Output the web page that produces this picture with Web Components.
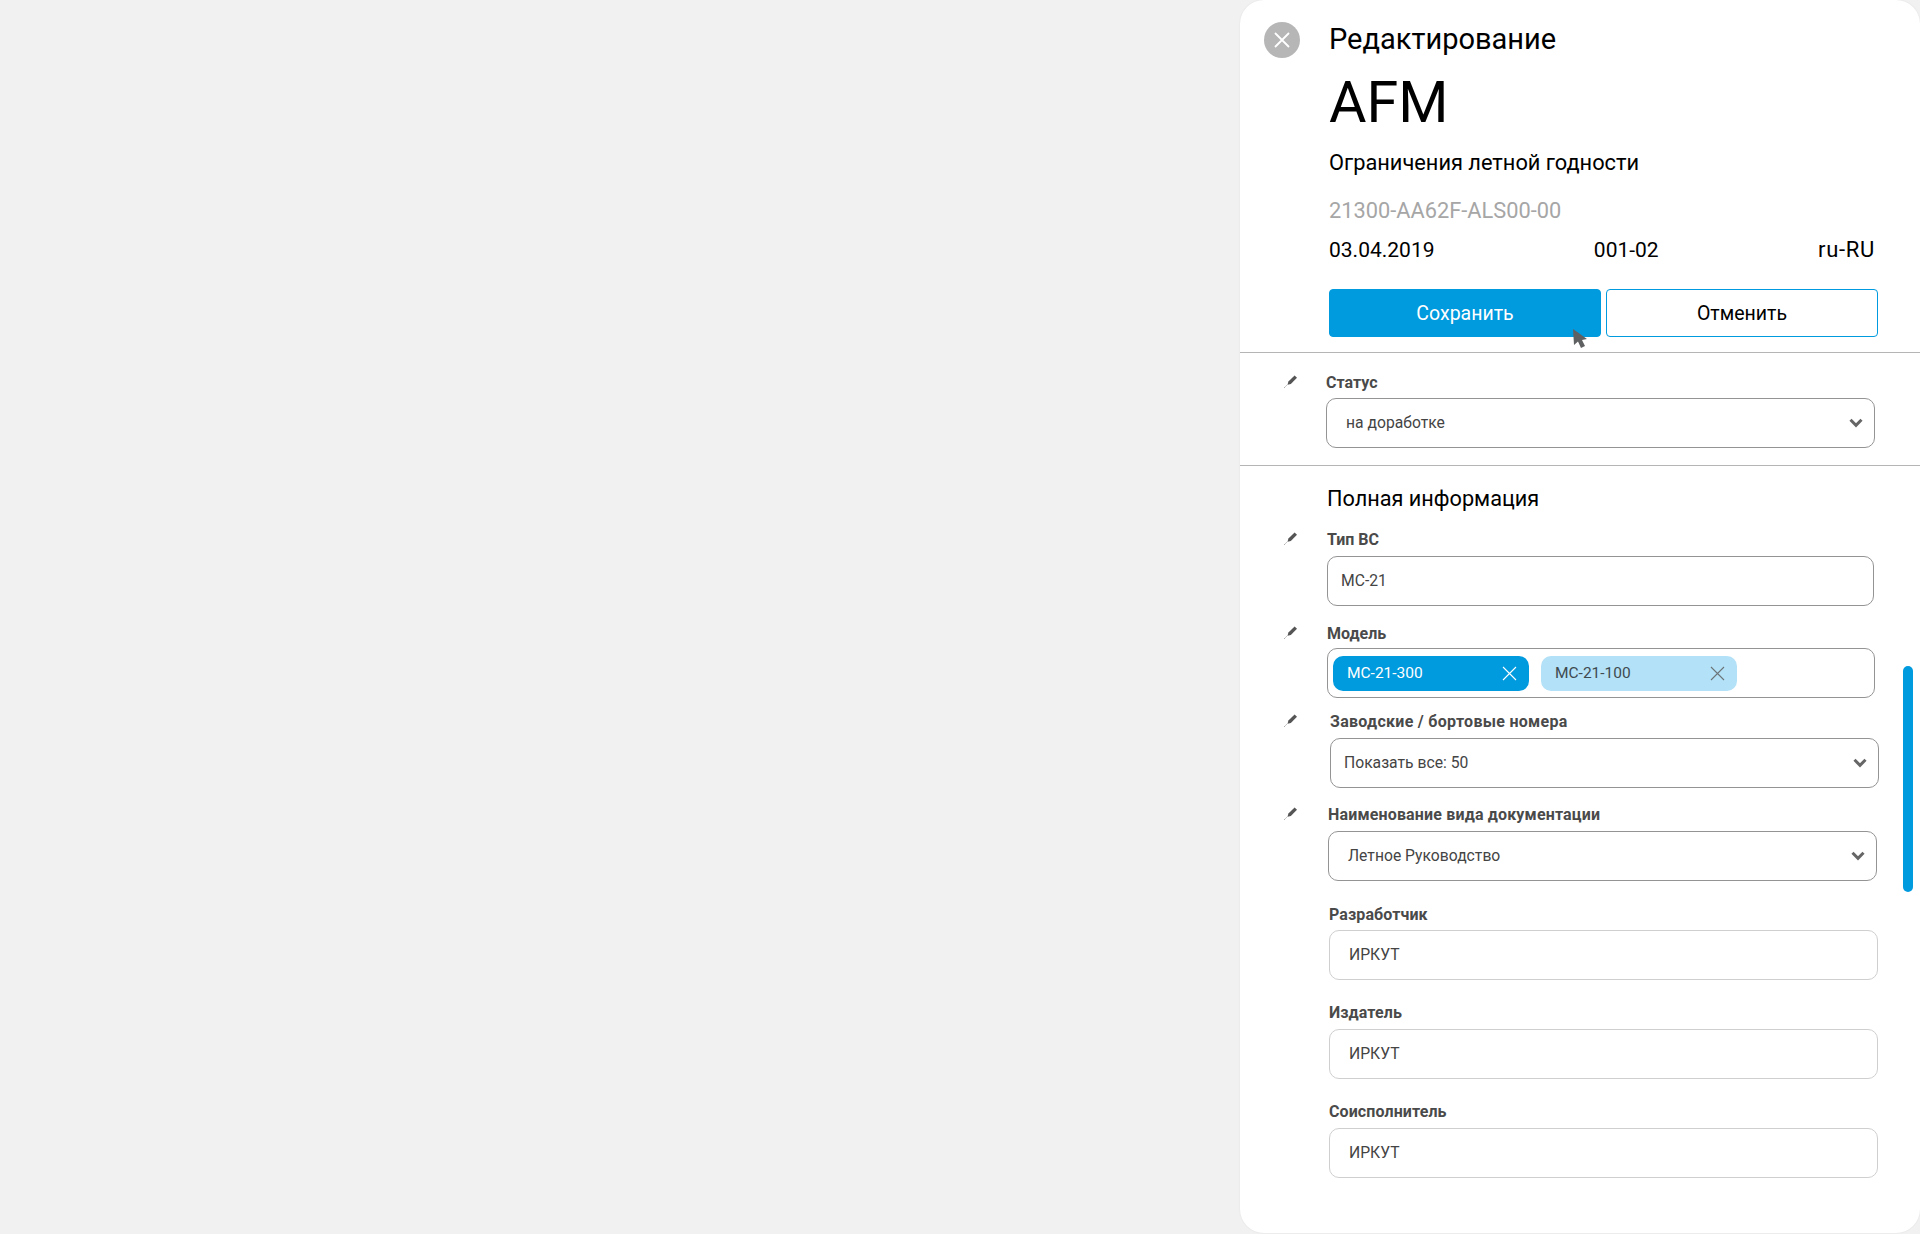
<!DOCTYPE html>
<html lang="ru">
<head>
<meta charset="utf-8">
<title>Редактирование</title>
<style>
  html, body { margin: 0; height: 100%; }
  body {
    background: #f1f1f1;
    display: flex;
    justify-content: flex-end;
    overflow: hidden;
    font-family: Roboto, "Liberation Sans", sans-serif;
  }
</style>
</head>
<body>
<edit-panel>
  <panel-header
    slot="header"
    kicker="Редактирование"
    name="AFM"
    subtitle="Ограничения летной годности"
    code="21300-AA62F-ALS00-00"
    date="03.04.2019"
    version="001-02"
    locale="ru-RU"></panel-header>
  <section-rule></section-rule>

  <form-field label="Статус" editable style="--indent:86px;--width:549px;--gap:6px;margin-top:19px">
    <field-box value="на доработке" chevron style="--pad:19px"></field-box>
  </form-field>

  <section-rule style="margin-top:17px"></section-rule>
  <section-title style="margin-top:19px">Полная информация</section-title>

  <form-field label="Тип ВС" editable style="--indent:87px;--width:547px;--gap:7px;margin-top:16px">
    <field-box value="МС-21" style="--pad:13px"></field-box>
  </form-field>

  <form-field label="Модель" editable style="--indent:87px;--width:548px;--gap:5px;margin-top:17px">
    <field-box style="--pad:5px">
      <tag-chip active>МС-21-300</tag-chip>
      <tag-chip>МС-21-100</tag-chip>
    </field-box>
  </form-field>

  <form-field label="Заводские / бортовые номера" editable style="--indent:90px;--width:549px;--gap:7px;--track:0.28px;margin-top:13px">
    <field-box value="Показать все: 50" chevron style="--pad:13px"></field-box>
  </form-field>

  <form-field label="Наименование вида документации" editable style="--indent:88px;--width:549px;--gap:7px;--track:0.16px;margin-top:16px">
    <field-box value="Летное Руководство" chevron style="--pad:19px"></field-box>
  </form-field>

  <form-field label="Разработчик" style="--indent:89px;--width:549px;--gap:6px;--track:0.1px;margin-top:23px">
    <field-box value="ИРКУТ" light style="--pad:19px"></field-box>
  </form-field>

  <form-field label="Издатель" style="--indent:89px;--width:549px;--gap:7px;--track:0.1px;margin-top:22px">
    <field-box value="ИРКУТ" light style="--pad:19px"></field-box>
  </form-field>

  <form-field label="Соисполнитель" style="--indent:89px;--width:549px;--gap:7px;--track:0.1px;margin-top:22px">
    <field-box value="ИРКУТ" light style="--pad:19px"></field-box>
  </form-field>
</edit-panel>

<script>
// панель справа, скролл и курсор лежат поверх контента
class EditPanel extends HTMLElement {
  constructor() {
    super();
    this.attachShadow({ mode: "open" });
  }

  connectedCallback() {
    this.shadowRoot.innerHTML = `
    <style>
      :host {
        display: block;
        position: relative;
        box-sizing: border-box;
        width: 680px;
        height: 1233px;
        background: #fff;
        border-radius: 24px;
        overflow: hidden;
        box-shadow: 0 0 2px rgba(0, 0, 0, 0.08);
      }
      .scroll {
        position: absolute;
        left: 663px;
        top: 666px;
        width: 10px;
        height: 226px;
        border-radius: 5px;
        background: #009ade;
      }
      .cursor {
        position: absolute;
        left: 332px;
        top: 328px;
        width: 16px;
        height: 22px;
      }
    </style>
    <slot name="header"></slot>
    <slot></slot>
    <div class="scroll"></div>
    <svg class="cursor" viewBox="0 0 16 22">
      <path d="M1 1 L2 17 L6 13.5 L9 20 L13 18 L10 12 L15 11 Z" fill="#5f6062"/>
    </svg>
    `;
  }
}

class PanelHeader extends HTMLElement {
  constructor() {
    super();
    this.attachShadow({ mode: "open" });
  }

  connectedCallback() {
    const a = (name) => this.getAttribute(name);
    this.shadowRoot.innerHTML = `
    <style>
      :host {
        display: block;
        box-sizing: border-box;
        height: 352px;
        padding: 19px 0 0 24px;
        color: #000;
      }
      .wrap {
        display: grid;
        grid-template-columns: 36px 1fr;
        column-gap: 29px;
      }
      .close {
        width: 36px;
        height: 36px;
        margin-top: 3px;
        border-radius: 50%;
        background: #b6b6b6;
        display: flex;
        align-items: center;
        justify-content: center;
      }
      .kicker { font-size: 29px; line-height: 40px; }
      .name { font-size: 57.5px; line-height: 64px; margin-top: 12px; }
      .subtitle { font-size: 21.8px; line-height: 32px; margin-top: 12px; }
      .code { font-size: 21.8px; line-height: 28px; margin-top: 18px; color: #a6a6a6; }
      .meta {
        display: flex;
        justify-content: space-between;
        align-items: baseline;
        width: 546px;
        font-size: 21px;
        line-height: 28px;
        margin-top: 11px;
      }
      .locale { font-size: 22px; letter-spacing: 0.7px; }
      .actions {
        display: grid;
        grid-template-columns: 272px 272px;
        column-gap: 5px;
        margin-top: 25px;
      }
      button {
        height: 48px;
        border-radius: 4px;
        border: 1px solid #009ade;
        font: inherit;
        font-size: 19.5px;
        background: #fff;
        color: #000;
        padding: 0;
      }
      button.primary { background: #009ade; color: #fff; }
    </style>
    <div class="wrap">
      <div class="close">
        <svg width="18" height="18" viewBox="0 0 18 18">
          <path d="M2 2 L16 16 M16 2 L2 16" stroke="#fff" stroke-width="1.8" fill="none"/>
        </svg>
      </div>
      <div>
        <div class="kicker">${a("kicker")}</div>
        <div class="name">${a("name")}</div>
        <div class="subtitle">${a("subtitle")}</div>
        <div class="code">${a("code")}</div>
        <div class="meta">
          <span>${a("date")}</span>
          <span>${a("version")}</span>
          <span class="locale">${a("locale")}</span>
        </div>
        <div class="actions">
          <button class="primary">Сохранить</button>
          <button>Отменить</button>
        </div>
      </div>
    </div>
    `;
  }
}

class SectionRule extends HTMLElement {
  constructor() {
    super();
    this.attachShadow({ mode: "open" });
    this.shadowRoot.innerHTML = `
    <style>
      :host { display: block; height: 1px; background: #b5b5b5; }
    </style>
    `;
  }
}

class SectionTitle extends HTMLElement {
  constructor() {
    super();
    this.attachShadow({ mode: "open" });
    this.shadowRoot.innerHTML = `
    <style>
      :host {
        display: block;
        padding-left: 87px;
        font-size: 21.7px;
        line-height: 28px;
        color: #000;
      }
    </style>
    <slot></slot>
    `;
  }
}

class FormField extends HTMLElement {
  constructor() {
    super();
    this.attachShadow({ mode: "open" });
  }

  connectedCallback() {
    const pencil = this.hasAttribute("editable")
      ? `<svg class="pencil" width="14" height="14" viewBox="0 0 14 14">
           <path d="M4.4 7.6 L10.6 1.4 L13 3.8 L6.8 10 L3.6 10.8 Z" fill="#555"/>
           <path d="M0.4 13.6 L3.2 10.8" stroke="#777" stroke-width="1" stroke-dasharray="1 0.8"/>
         </svg>`
      : "";
    this.shadowRoot.innerHTML = `
    <style>
      :host {
        display: grid;
        grid-template-columns: var(--indent) var(--width);
        font-family: Roboto, "Liberation Sans", sans-serif;
      }
      .pencil { position: absolute; left: 44px; top: 2px; }
      .side { position: relative; }
      .label {
        font-size: 16px;
        line-height: 20px;
        font-weight: 700;
        letter-spacing: var(--track, 0);
        color: #4a4a4a;
        padding-top: 1px;
        margin-bottom: calc(var(--gap) - 1px);
      }
    </style>
    <div class="side">${pencil}</div>
    <div>
      <div class="label">${this.getAttribute("label")}</div>
      <slot></slot>
    </div>
    `;
  }
}

class FieldBox extends HTMLElement {
  constructor() {
    super();
    this.attachShadow({ mode: "open" });
  }

  connectedCallback() {
    const chevron = this.hasAttribute("chevron")
      ? `<svg class="chevron" width="14" height="10" viewBox="0 0 14 10">
           <path d="M1.5 1.8 L7 7.3 L12.5 1.8" stroke="#666" stroke-width="3" fill="none"/>
         </svg>`
      : "";
    const value = this.getAttribute("value") || "";
    this.shadowRoot.innerHTML = `
    <style>
      :host {
        display: flex;
        align-items: center;
        gap: 12px;
        position: relative;
        box-sizing: border-box;
        height: 50px;
        padding: 0 var(--pad);
        border: 1px solid ${this.hasAttribute("light") ? "#cfcfcf" : "#949494"};
        border-radius: 10px;
        background: #fff;
        font-size: 15.7px;
        color: #444;
      }
      span { margin-top: -1px; }
      .chevron { position: absolute; right: 11px; top: 50%; margin-top: -5px; }
    </style>
    ${value ? `<span>${value}</span>` : ""}
    <slot></slot>
    ${chevron}
    `;
  }
}

class TagChip extends HTMLElement {
  constructor() {
    super();
    this.attachShadow({ mode: "open" });
  }

  connectedCallback() {
    const active = this.hasAttribute("active");
    const cross = active ? "#fff" : "#6b7479";
    this.shadowRoot.innerHTML = `
    <style>
      :host {
        display: flex;
        align-items: center;
        justify-content: space-between;
        box-sizing: border-box;
        width: 196px;
        height: 35px;
        padding: 0 12px 0 14px;
        border-radius: 10px;
        background: ${active ? "#009ade" : "#b3e1f7"};
        color: ${active ? "#fff" : "#3f4a50"};
        font-size: 15.5px;
      }
      span { margin-top: -1px; }
      svg { margin-top: 1px; }
    </style>
    <span><slot></slot></span>
    <svg width="15" height="15" viewBox="0 0 15 15">
      <path d="M1 1 L14 14 M14 1 L1 14" stroke="${cross}" stroke-width="1.1" fill="none"/>
    </svg>
    `;
  }
}

customElements.define("edit-panel", EditPanel);
customElements.define("panel-header", PanelHeader);
customElements.define("section-rule", SectionRule);
customElements.define("section-title", SectionTitle);
customElements.define("form-field", FormField);
customElements.define("field-box", FieldBox);
customElements.define("tag-chip", TagChip);
</script>
</body>
</html>
